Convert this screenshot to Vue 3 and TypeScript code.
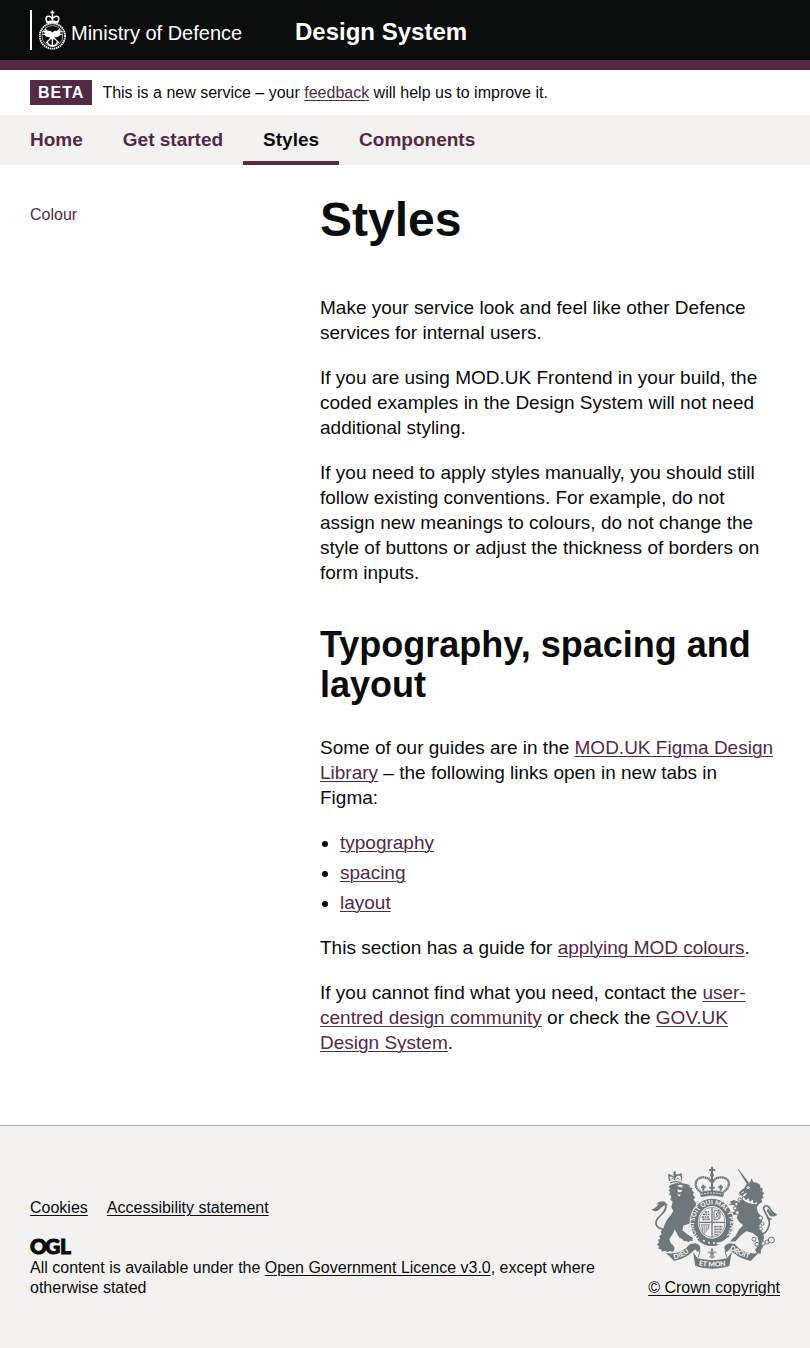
<script setup lang="ts">
interface NavItem {
  label: string
  href: string
  current?: boolean
}

const navItems: NavItem[] = [
  { label: 'Home', href: '#home' },
  { label: 'Get started', href: '#get-started' },
  { label: 'Styles', href: '#styles', current: true },
  { label: 'Components', href: '#components' },
]

const figmaGuides: string[] = ['typography', 'spacing', 'layout']
</script>

<template>
  <div class="page">
    <header class="header">
      <div class="container header-row">
        <a class="brand" href="#mod" aria-label="Ministry of Defence">
          <svg width="215" height="40" viewBox="30 10 215 40" aria-hidden="true">
            <rect x="30" y="10" width="2" height="40" fill="#fff" />
            <g fill="none" stroke="#fff">
              <circle cx="52.4" cy="36" r="12.6" stroke-width="1.8" stroke-dasharray="1.5 .6" />
              <circle cx="52.4" cy="36" r="10.4" stroke-width=".6" />
              <path d="M45 29l14 14M60 29L46 43" stroke-width="1.2" />
              <path d="M52.4 35v11M49.8 38.5h5.2M47 41.5c1 3 3 4.500 5.400 4.500s4.400-1.500 5.400-4.500" stroke-width="1.400" />
              <path d="M47.500 22.500c-3-4-1-7 2-6 1.500.5 2.500 1.500 2.900 2.500.4-1 1.400-2 2.900-2.500 3-1 5 2 2 6M52.400 10.500v11M50.500 12.500h3.800" stroke-width="1.500" />
              <path d="M46.500 22.500q6-1.500 11.800 0" stroke-width="2.400" />
            </g>
            <path d="M52.400 32.500c-1.500-1.800-3-2-4.500-1.500-2-.7-4.500-.4-6.400.6 2 .2 3 .8 3.700 1.800-1.500.1-2.300.5-3 1.100 2 .1 3 .9 3.800 1.900l4.400 1 2 2 2-2 4.400-1c.8-1 1.800-1.800 3.800-1.900-.7-.6-1.500-1-3-1.100.7-1 1.700-1.600 3.700-1.800-1.900-1-4.400-1.300-6.400-.6-1.500-.5-3-.3-4.500 1.500z" fill="#fff" />
            <text x="71" y="40" class="brand-text">Ministry of Defence</text>
          </svg>
        </a>
        <a class="service" href="#top">Design System</a>
      </div>
    </header>

    <div class="container phase">
      <strong class="tag">BETA</strong>
      <span>This is a new service – your <a href="#feedback">feedback</a> will help us to improve it.</span>
    </div>

    <nav class="nav" aria-label="Main">
      <ul class="container nav-list">
        <li v-for="item in navItems" :key="item.label">
          <a
            class="nav-link"
            :class="{ current: item.current }"
            :href="item.href"
            :aria-current="item.current ? 'page' : undefined"
          >{{ item.label }}</a>
        </li>
      </ul>
    </nav>

    <div class="container columns">
      <nav class="side" aria-label="Styles section">
        <a href="#colour">Colour</a>
      </nav>
      <main class="content">
        <h1>Styles</h1>
        <p>Make your service look and feel like other Defence services for internal users.</p>
        <p>If you are using MOD.UK Frontend in your build, the coded examples in the Design System will not need additional styling.</p>
        <p>If you need to apply styles manually, you should still follow existing conventions. For example, do not assign new meanings to colours, do not change the style of buttons or adjust the thickness of borders on form inputs.</p>
        <h2>Typography, spacing and layout</h2>
        <p>Some of our guides are in the <a href="#figma">MOD.UK Figma Design Library</a> – the following links open in new tabs in Figma:</p>
        <ul class="bullets">
          <li v-for="guide in figmaGuides" :key="guide"><a :href="'#' + guide">{{ guide }}</a></li>
        </ul>
        <p>This section has a guide for <a href="#colours">applying MOD colours</a>.</p>
        <p>If you cannot find what you need, contact the <a href="#community">user-centred design community</a> or check the <a href="#govuk">GOV.UK Design System</a>.</p>
      </main>
    </div>

    <footer class="footer">
      <div class="container footer-row">
        <div class="footer-main">
          <div class="footer-links">
            <a href="#cookies">Cookies</a>
            <a href="#accessibility">Accessibility statement</a>
          </div>
          <svg class="ogl" width="42" height="18" viewBox="0 0 42 18" aria-hidden="true">
            <text x="0 15 30" y="16" class="ogl-text">OGL</text>
          </svg>
          <div>All content is available under the <a href="#ogl">Open Government Licence v3.0</a>, except where otherwise stated</div>
        </div>

        <a class="copyright" href="#crown">
          <svg class="crest" width="126" height="103" viewBox="33 31 378 309" aria-hidden="true">
            <defs>
              <path id="garter" d="M178 248A54 60 0 1 1 262 238" />
              <path id="motto-left" d="M103 311Q137 303 163 276" />
              <path id="motto-mid" d="M176 329Q217 338 262 329" />
              <path id="motto-right" d="M268 280Q294 302 340 311" />
            </defs>

            <!-- lion -->
            <path
              d="M90 88L106 83L125 82L142 86L150 89L148 93L158 98L155 103L163 111L158 116L166 126L160 131L168 142L170 156L160 168L153 185L155 210L147 204L130 210L127 224L145 238L158 246L158 257L150 255L146 259L138 256L132 257L126 249L118 246L108 228L104 221L100 232L88 250L92 262L103 273L103 284L97 289L90 286L82 290L75 285L67 288L62 281L55 279L57 271L51 268L57 260L54 253L61 248L57 242L65 236L62 228L71 218L73 208L81 192L92 179L100 166L94 154L98 138L91 132L94 122L87 116L91 110L85 104L91 99L86 94Z"
              fill="#6f777b"
            />
            <path d="M74 221C49 219 43 205 52 190C62 176 82 166 77 149Q72 139 60 146C53 151 50 158 42 162" fill="none" stroke="#6f777b" stroke-width="5" />
            <path d="M34 160C43 162 51 154 57 145L48 146Q60 134 74 138L84 149L70 150L56 163Q44 172 34 160Z" fill="#6f777b" />
            <g fill="#f3f2f1">
              <path d="M111 91l9-4 12 4-8 1 7 4-12-2zM112 101l9 3 6-2-3 7-10 1zM113 113l4 4 5-2-3 8-6-5z" />
            </g>
            <path d="M90 82q16-8 34-1M90 76c-9-18 4-20 14-8 7-16 25-14 20 7M104 73V53M99 57h10" fill="none" stroke="#6f777b" stroke-width="4" />
            <path d="M93 72q2-8 8-1M109 71q5-8 9 1" fill="none" stroke="#6f777b" stroke-width="3" />
            <g fill="#6f777b"><circle cx="88" cy="59" r="4" /><circle cx="104" cy="51" r="4" /><circle cx="122" cy="57" r="4" /></g>

            <!-- unicorn -->
            <path d="M292 39L297 42L327 81L321 86Z" fill="#6f777b" />
            <g fill="#6f777b">
              <path
                d="M319 86L330 80L335 68L340 80L351 81L361 88L360 95L369 99L366 106L373 113L367 118L371 126L364 130L367 139L357 145L350 156L354 170L363 182L366 196L358 210L361 222L370 234L372 248L367 262L369 273L363 283L362 294L350 292L345 282L353 272L357 260L352 243L338 232L317 226L304 218L309 208L297 198L290 186L296 170L292 154L300 137L308 126L317 119L322 111L313 114L307 121L299 119L297 110L305 103L313 96Z"
              />
              <path d="M315 205L348 214L351 226L320 225L301 240L287 257L270 258L277 249L286 242L298 220Z" />
              <path d="M296 138L281 133L268 139L274 142L265 149L278 147L291 154L285 167L272 172L282 178L297 174L308 180L316 160Z" />
            </g>
            <path d="M319 96l7-3 3 4-8 1M304 112l8-4" fill="none" stroke="#f3f2f1" stroke-width="3" />
            <g fill="#f3f2f1" stroke="#6f777b" stroke-width="3">
              <path d="M305 130l5-9 8 11 8-7 4 11 10-6 1 11 13-4-2 9q-30 3-47-16z" />
              <circle cx="299" cy="131" r="5" />
              <circle cx="289" cy="145" r="5" /><circle cx="285" cy="158" r="5" /><circle cx="292" cy="171" r="6" />
              <circle cx="362" cy="187" r="6" /><circle cx="367" cy="204" r="5" /><circle cx="362" cy="219" r="5" />
              <circle cx="342" cy="251" r="6" /><circle cx="351" cy="266" r="6" /><circle cx="370" cy="263" r="6" /><circle cx="381" cy="259" r="6" /><circle cx="394" cy="253" r="9" />
            </g>
            <path d="M355 235C374 238 383 225 387 209C394 188 371 172 371 158C372 146 387 149 391 161C394 172 403 174 410 178" fill="none" stroke="#6f777b" stroke-width="5" />
            <path d="M384 158Q391 174 410 177Q402 186 390 181L380 166ZM376 172Q383 188 398 190L389 194L381 187Z" fill="#6f777b" />

            <!-- garter and shield -->
            <ellipse cx="216" cy="200" rx="67" ry="74" fill="#f3f2f1" />
            <ellipse cx="216" cy="200" rx="53" ry="60" fill="none" stroke="#6f777b" stroke-width="22" />
            <text class="motto garter-text"><textPath href="#garter">HONI SOIT QUI MAL Y PENSE</textPath></text>
            <g fill="#f3f2f1"><circle cx="192" cy="255" r="3" /><circle cx="207" cy="261" r="3" /><circle cx="222" cy="262" r="3" /><path d="M229 260q20 2 33-15l5 4q-12 20-36 17z" /></g>
            <g fill="none" stroke="#6f777b">
              <ellipse cx="216" cy="200" rx="39" ry="45" stroke-width="2" />
              <path d="M216 157v88M178 200h77" stroke-width="4" />
              <path d="M188 176h20M185 184h23M187 191h22M194 169h14M223 213h25M223 221h23M223 229h19M223 237h12" stroke-width="5" stroke-dasharray="7 2 4 2" />
              <path d="M222 165h18v22q-9 9-18 5zM226 188l5-9-3-4 8-7 1 8-5 5 5 6" stroke-width="3" />
              <path d="M184 206h24q-2 18-18 29zM189 208v17M194 208v23M199 208v17M204 208v12" stroke-width="2" />
            </g>

            <!-- crown -->
            <g fill="none" stroke="#6f777b">
              <path d="M182 109C155 91 168 64 191 65Q211 67 216 82Q222 66 243 65C269 65 277 91 250 109" stroke-width="7" stroke-dasharray="5 1" />
              <path d="M216 33v76M207 43h19M209 75h15" stroke-width="6" />
              <path d="M181 110q35-10 70 0l-2 13q-34-9-66 0z" fill="#6f777b" stroke-width="2" />
              <path d="M184 116q31-8 64 0" stroke="#f3f2f1" stroke-width="3" stroke-dasharray="5 4" />
              <path d="M190 105v-18M183 95h14M242 105v-18M235 95h14M216 104v-16M208 96h16" stroke-width="6" />
            </g>
            <circle cx="216" cy="58" r="6" fill="#6f777b" />

            <!-- ribbon -->
            <g fill="#6f777b">
              <path d="M78 292Q123 299 150 265L166 263Q183 268 181 279L174 290L165 281Q142 308 102 316Q92 305 78 292Z" />
              <path d="M356 292Q311 299 284 265L268 263Q251 268 253 279L260 290L269 281Q292 308 332 316Q342 305 356 292Z" />
              <path d="M159 289L173 308Q217 319 261 308L275 289L268 331Q217 348 166 331Z" />
            </g>
            <g fill="none" stroke="#6f777b">
              <path d="M169 275q18 4 5 30M266 275q-18 4-5 30" stroke-width="3" />
              <path d="M216 310v-33M216 280q-8 9 0 15q8-6 0-15M203 292q3-8 10 2v7M230 292q-4-8-11 2v7M207 304h18" stroke-width="3" />
            </g>
            <g class="motto">
              <text><textPath href="#motto-left">DIEU</textPath></text>
              <text><textPath href="#motto-mid">ET MON</textPath></text>
              <text><textPath href="#motto-right">DROIT</textPath></text>
            </g>
          </svg>
          <span>© Crown copyright</span>
        </a>
      </div>
    </footer>
  </div>
</template>

<style>
body {
  background: #f3f2f1;
}
</style>

<style scoped>
.page {
  background: #fff;
  color: #0b0c0c;
  font: 16px/20px "Liberation Sans", Arial, sans-serif;
}

a {
  color: #532a45;
  text-decoration: underline;
  text-decoration-thickness: 1px;
  text-underline-offset: 2px;
}

.container {
  padding: 0 30px;
}

.header {
  background: #0b0c0c;
  border-bottom: 10px solid #532a45;
}

.header-row {
  display: flex;
  align-items: center;
  gap: 50px;
  padding-top: 10px;
  padding-bottom: 10px;
}

.brand,
.brand svg {
  display: block;
}

.brand-text {
  fill: #fff;
  font-size: 20px;
}

.service {
  color: #fff;
  font-size: 24px;
  font-weight: 700;
  line-height: 30px;
  padding-top: 3px;
  text-decoration: none;
}

.phase {
  display: flex;
  align-items: center;
  gap: 10px;
  padding-top: 10px;
  padding-bottom: 10px;
}

.tag {
  background: #532a45;
  color: #fff;
  line-height: 25px;
  letter-spacing: 1px;
  padding: 0 8px;
}

.nav {
  background: #f3f2f1;
}

.nav-list {
  display: flex;
  list-style: none;
  margin: 0;
  padding: 0 10px;
}

.nav-link {
  display: block;
  padding: 0 20px;
  font-size: 19px;
  font-weight: 700;
  line-height: 50px;
  text-decoration: none;
}

.current {
  color: #0b0c0c;
  box-shadow: inset 0 -4px #532a45;
}

.columns {
  display: grid;
  grid-template-columns: 250px minmax(0, 1fr);
  gap: 40px;
  padding-top: 30px;
  padding-bottom: 70px;
}

.side {
  padding-top: 10px;
}

.side a {
  text-decoration: none;
}

.content {
  font-size: 19px;
  line-height: 25px;
}

h1 {
  margin: 0 0 50px;
  font-size: 48px;
  line-height: 50px;
}

h2 {
  margin: 40px 0 30px;
  font-size: 36px;
  line-height: 40px;
}

p {
  margin: 0 0 20px;
}

p:last-child {
  margin-bottom: 0;
}

.bullets {
  display: grid;
  gap: 5px;
  margin: 0 0 20px;
  padding-left: 20px;
}

.footer {
  background: #f3f2f1;
  border-top: 1px solid #b1b4b6;
}

.footer a {
  color: #0b0c0c;
}

.footer-row {
  display: flex;
  align-items: flex-end;
  gap: 30px;
  padding-top: 40px;
  padding-bottom: 50px;
}

.footer-main {
  flex: 1;
}

.footer-links {
  display: flex;
  gap: 19px;
  margin-bottom: 20px;
}

.ogl {
  display: block;
  margin-bottom: 2px;
  overflow: visible;
}

.ogl-text {
  fill: #0b0c0c;
  stroke: #0b0c0c;
  stroke-width: 1px;
  font: 900 21px Lato, sans-serif;
}

.copyright {
  display: flex;
  flex-direction: column;
  align-items: center;
  gap: 9px;
  white-space: nowrap;
}

.crest {
  display: block;
}

.motto {
  fill: #f3f2f1;
  font: 900 21px Lato, sans-serif;
}

.garter-text {
  font-size: 19px;
}
</style>
